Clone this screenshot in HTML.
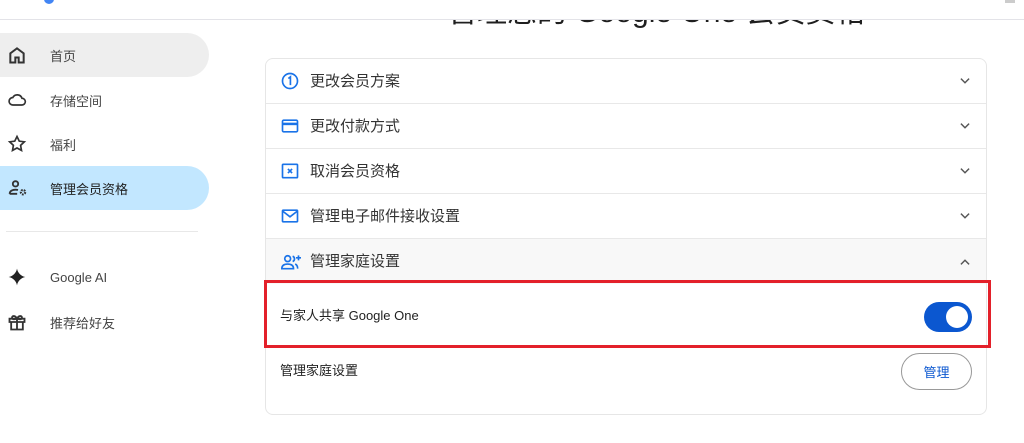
<!DOCTYPE html>
<html><head><meta charset="utf-8"><style>
*{box-sizing:border-box;margin:0;padding:0}
body{width:1024px;height:443px;overflow:hidden;background:#fff;font-family:"Liberation Sans","Noto Sans CJK SC",sans-serif;color:#1f1f1f;position:relative}
.hdr{position:absolute;left:0;top:0;width:1024px;height:20px;border-bottom:1px solid #e3e3e8;background:#fff;overflow:hidden;z-index:3}
.title{position:absolute;left:447px;top:-13px;font-size:30px;color:#1f1f1f;white-space:nowrap;z-index:2}
.nav{position:absolute;left:0;height:44px;width:209px;border-radius:0 22px 22px 0;display:flex;align-items:center;font-size:13px;color:#444}
.nav svg{position:absolute;left:7px}
.nav span{position:absolute;left:50px}
.card{position:absolute;left:265px;top:58px;width:722px;height:357px;border:1px solid #e6e6e6;border-radius:8px;overflow:hidden}
.row{position:absolute;left:0;width:100%;height:45px;border-bottom:1px solid #e8e8e8;display:flex;align-items:center;font-size:15px;color:#333}
.row svg.i{position:absolute;left:14px}
.row span{position:absolute;left:44px;top:11px}
.row svg.c{position:absolute;right:14px}
</style></head><body>
<div class="hdr"><div style="position:absolute;left:44px;top:-6px;width:10px;height:10px;border-radius:50%;background:#4285f4"></div><div style="position:absolute;left:1005px;top:0;width:10px;height:3px;background:#ccc"></div></div>
<div class="title">管理您的 Google One 会员资格</div>

<div class="nav" style="top:33px;background:#eeeeee"><svg width="20" height="20" viewBox="0 0 24 24"><path d="M4 21V10l8-6 8 6v11h-6v-6h-4v6z" fill="none" stroke="#333" stroke-width="2.4"/></svg><span>首页</span></div>
<div class="nav" style="top:78px"><svg width="20" height="20" viewBox="0 0 24 24"><path d="M7 18h11a4 4 0 0 0 0-8 6 6 0 0 0-11-1 4.5 4.5 0 0 0 0 9z" fill="none" stroke="#333" stroke-width="2"/></svg><span>存储空间</span></div>
<div class="nav" style="top:122px"><svg width="20" height="20" viewBox="0 0 24 24"><path d="M12 3l2.7 5.6 6.1.8-4.5 4.2 1.1 6.1L12 16.8 6.6 19.7l1.1-6.1L3.2 9.4l6.1-.8z" fill="none" stroke="#333" stroke-width="2"/></svg><span>福利</span></div>
<div class="nav" style="top:166px;background:#c2e7ff;color:#1f1f1f"><svg width="22" height="20" viewBox="0 0 24 24"><circle cx="9" cy="7" r="3.2" fill="none" stroke="#333" stroke-width="2.2"/><path d="M2 19c0-4 4-5 7-5 1 0 2 .1 3 .4M2 19h9" fill="none" stroke="#333" stroke-width="2.2"/><circle cx="18" cy="17" r="2.6" fill="none" stroke="#333" stroke-width="2.6" stroke-dasharray="2 1.2"/></svg><span>管理会员资格</span></div>
<div style="position:absolute;left:6px;top:231px;width:192px;height:1px;background:#e8e8e8"></div>
<div class="nav" style="top:255px"><svg width="20" height="20" viewBox="0 0 24 24"><path d="M12 2c.8 5 5 9.2 10 10-5 .8-9.2 5-10 10-.8-5-5-9.2-10-10 5-.8 9.2-5 10-10z" fill="#222"/></svg><span>Google AI</span></div>
<div class="nav" style="top:300px"><svg width="20" height="20" viewBox="0 0 24 24"><path d="M3 8h18v4H3zM5 12v9h14v-9M12 8v13M12 8c-2-4-6-4-6-1s6 1 6 1c2-4 6-4 6-1s-6 1-6 1" fill="none" stroke="#333" stroke-width="2.2"/></svg><span>推荐给好友</span></div>

<div class="card">
<div class="row" style="top:0"><svg class="i" width="20" height="20" viewBox="0 0 24 24"><circle cx="12" cy="12" r="9" fill="none" stroke="#1a73e8" stroke-width="2"/><path d="M10 9l2.5-2v10" fill="none" stroke="#1a73e8" stroke-width="2"/></svg><span>更改会员方案</span><svg class="c" width="14" height="14" viewBox="0 0 24 24"><path d="M5 8l7 7 7-7" fill="none" stroke="#555" stroke-width="2.5"/></svg></div>
<div class="row" style="top:45px"><svg class="i" width="20" height="20" viewBox="0 0 24 24"><rect x="3" y="5" width="18" height="14" rx="1.5" fill="none" stroke="#1a73e8" stroke-width="2"/><rect x="3" y="8" width="18" height="3" fill="#1a73e8"/></svg><span>更改付款方式</span><svg class="c" width="14" height="14" viewBox="0 0 24 24"><path d="M5 8l7 7 7-7" fill="none" stroke="#555" stroke-width="2.5"/></svg></div>
<div class="row" style="top:90px"><svg class="i" width="20" height="20" viewBox="0 0 24 24"><rect x="3" y="4" width="18" height="16" rx="1" fill="none" stroke="#1a73e8" stroke-width="2"/><path d="M9.5 9.5l5 5M14.5 9.5l-5 5" stroke="#1a73e8" stroke-width="2"/></svg><span>取消会员资格</span><svg class="c" width="14" height="14" viewBox="0 0 24 24"><path d="M5 8l7 7 7-7" fill="none" stroke="#555" stroke-width="2.5"/></svg></div>
<div class="row" style="top:135px"><svg class="i" width="20" height="20" viewBox="0 0 24 24"><rect x="3" y="5" width="18" height="14" rx="1" fill="none" stroke="#1a73e8" stroke-width="2"/><path d="M3 6l9 7 9-7" fill="none" stroke="#1a73e8" stroke-width="2"/></svg><span>管理电子邮件接收设置</span><svg class="c" width="14" height="14" viewBox="0 0 24 24"><path d="M5 8l7 7 7-7" fill="none" stroke="#555" stroke-width="2.5"/></svg></div>
<div class="row" style="top:180px;background:#f8f8f8;border-bottom:none"><svg class="i" width="22" height="20" viewBox="0 0 26 24"><circle cx="9" cy="8" r="3.5" fill="none" stroke="#1a73e8" stroke-width="2"/><path d="M2 20c0-4 3-5.5 7-5.5s7 1.5 7 5.5z" fill="none" stroke="#1a73e8" stroke-width="2"/><path d="M15 5a3.5 3.5 0 0 1 0 6.5M18 14.5c2 .8 3 2.5 3 5.5" fill="none" stroke="#1a73e8" stroke-width="2"/><path d="M22 4v6M19 7h6" stroke="#1a73e8" stroke-width="2"/></svg><span>管理家庭设置</span><svg class="c" width="14" height="14" viewBox="0 0 24 24"><path d="M5 16l7-7 7 7" fill="none" stroke="#555" stroke-width="2.5"/></svg></div>
<div style="position:absolute;left:14px;top:246px;font-size:13px;color:#1f1f1f">与家人共享 Google One</div>
<div style="position:absolute;left:658px;top:243px;width:48px;height:30px;border-radius:15px;background:#0b57d0"><div style="position:absolute;right:4px;top:4px;width:22px;height:22px;border-radius:50%;background:#fff"></div></div>
<div style="position:absolute;left:14px;top:301px;font-size:13px;color:#1f1f1f">管理家庭设置</div>
<div style="position:absolute;left:635px;top:294px;width:71px;height:37px;border:1px solid #999;border-radius:19px;color:#0b57d0;font-size:13px;display:flex;align-items:center;justify-content:center">管理</div>
</div>
<div style="position:absolute;left:264px;top:280px;width:727px;height:68px;border:3px solid #e3202a"></div>
</body></html>
